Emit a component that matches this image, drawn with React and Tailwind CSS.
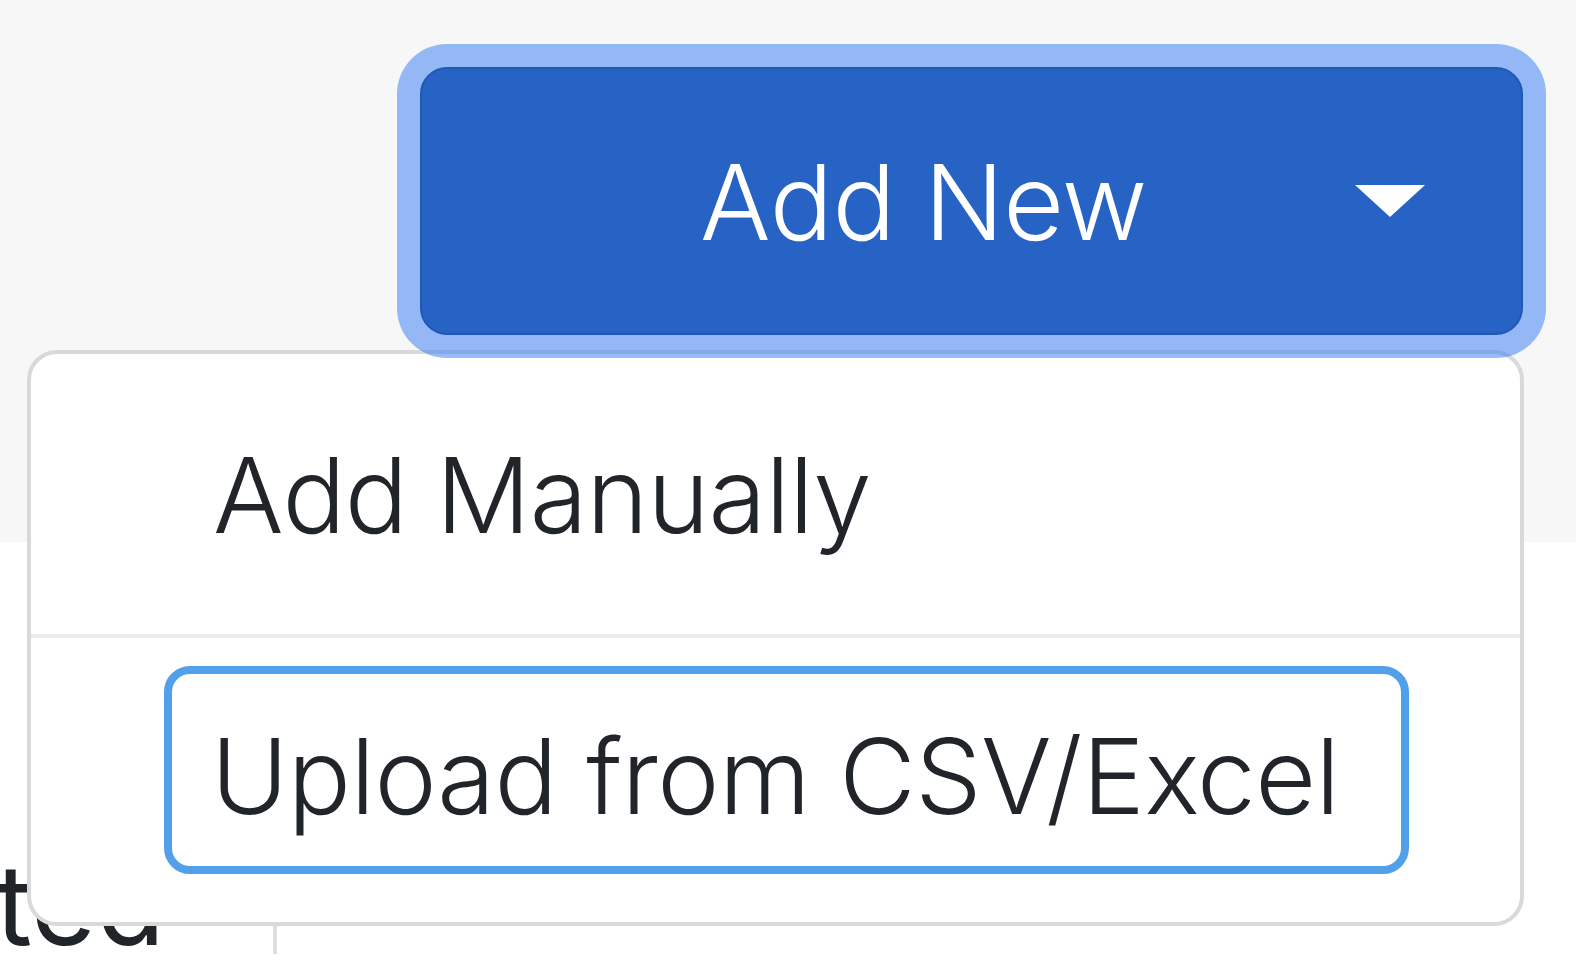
import React from "react";

const App = () => {
  return (
    <div className="relative w-[1576px] h-[968px] overflow-hidden bg-white text-[#212529] font-['Inter','Liberation_Sans',sans-serif] font-[350] tracking-[-0.5px]">
      {/* header band */}
      <div className="h-[542px] bg-[#f7f7f7] pl-[420px] pt-[67px]">
        <button className="relative z-20 flex items-center justify-between w-[1103px] h-[268px] pl-[278px] pr-[96px] rounded-[27px] border-2 border-[#2158b6] bg-[#2663c5] text-white shadow-[0_0_0_23px_rgba(47,121,243,0.5)]">
          <span className="text-[105px] leading-[105px]">Add New</span>
          <span className="w-0 h-0 border-l-[35px] border-r-[35px] border-t-[32px] border-l-transparent border-r-transparent border-t-white" />
        </button>
      </div>

      {/* page content under the menu */}
      <div className="pt-[288px]">
        <div className="flex">
          <div className="flex items-end justify-end w-[277px] h-[124px] overflow-hidden border-r-4 border-[#dedede] pr-[108px]">
            <span className="text-[112px] leading-[100px] tracking-normal font-normal whitespace-nowrap">Created</span>
          </div>
        </div>
      </div>

      {/* dropdown menu */}
      <div className="absolute z-10 left-[27px] top-[350px] w-[1497px] h-[576px] rounded-[30px] border-4 border-[#d9d9d9] bg-white">
        <div className="pl-[182px] pt-[88px] pb-[87px] text-[105px] leading-[105px] tracking-[-0.8px]">Add Manually</div>
        <div className="h-[4px] bg-[#e9ecef]" />
        <div className="mt-[28px] ml-[133px] w-[1245px] h-[208px] rounded-[26px] border-[8px] border-[#52a0ea] pl-[39px] pt-[49px]">
          <div className="text-[105px] leading-[105px] whitespace-nowrap">Upload from CSV/Excel</div>
        </div>
      </div>
    </div>
  );
};

export default App;
